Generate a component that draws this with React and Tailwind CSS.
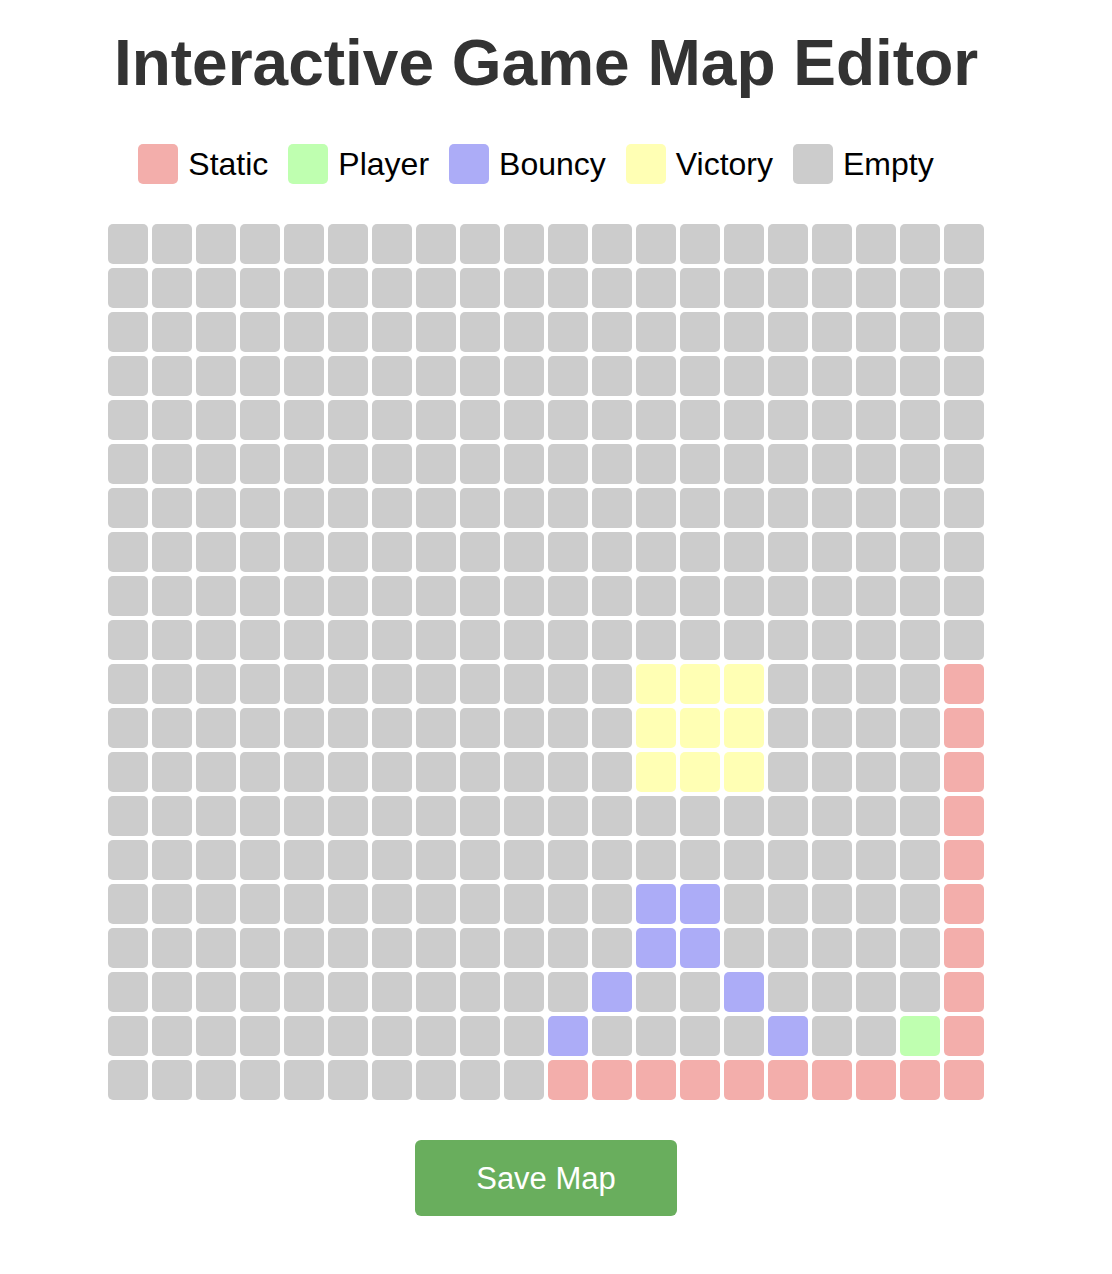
import React from "react";

const COLORS = {
  S: "bg-[#f3aeab]",
  P: "bg-[#bfffb0]",
  B: "bg-[#acacf7]",
  V: "bg-[#ffffb4]",
  E: "bg-[#cccccc]",
};

function buildMap() {
  const g = Array.from({ length: 20 }, () => Array(20).fill("E"));
  for (let r = 10; r <= 12; r++) for (let c = 12; c <= 14; c++) g[r][c] = "V";
  for (let r = 10; r <= 19; r++) g[r][19] = "S";
  g[15][12] = "B"; g[15][13] = "B";
  g[16][12] = "B"; g[16][13] = "B";
  g[17][11] = "B"; g[17][14] = "B";
  g[18][10] = "B"; g[18][15] = "B";
  g[18][18] = "P";
  for (let c = 10; c <= 19; c++) g[19][c] = "S";
  return g;
}

const legend = [
  ["Static", "S"],
  ["Player", "P"],
  ["Bouncy", "B"],
  ["Victory", "V"],
  ["Empty", "E"],
];

export default function App() {
  const map = buildMap();
  return (
    <div className="w-[1092px] flex flex-col items-center bg-white" style={{ fontFamily: '"Liberation Sans", Arial, sans-serif' }}>
      <h1 className="mt-[26px] text-[64px] leading-[74px] font-bold text-[#333333]">
        Interactive Game Map Editor
      </h1>
      <div className="mt-[44px] flex items-center h-[40px]">
        {legend.map(([label, k]) => (
          <div key={label} className="flex items-center mr-[20px]">
            <div className={`w-[40px] h-[40px] rounded-[5px] ${COLORS[k]}`} />
            <span className="ml-[10px] text-[32px] leading-[40px] text-black">{label}</span>
          </div>
        ))}
      </div>
      <div className="mt-[40px] grid grid-cols-[repeat(20,40px)] gap-[4px]">
        {map.flat().map((k, i) => (
          <div key={i} className={`w-[40px] h-[40px] rounded-[5px] ${COLORS[k]}`} />
        ))}
      </div>
      <button className="mt-[40px] w-[262px] h-[76px] rounded-[6px] bg-[#69ae5d] text-white text-[31px] leading-none">
        Save Map
      </button>
    </div>
  );
}
